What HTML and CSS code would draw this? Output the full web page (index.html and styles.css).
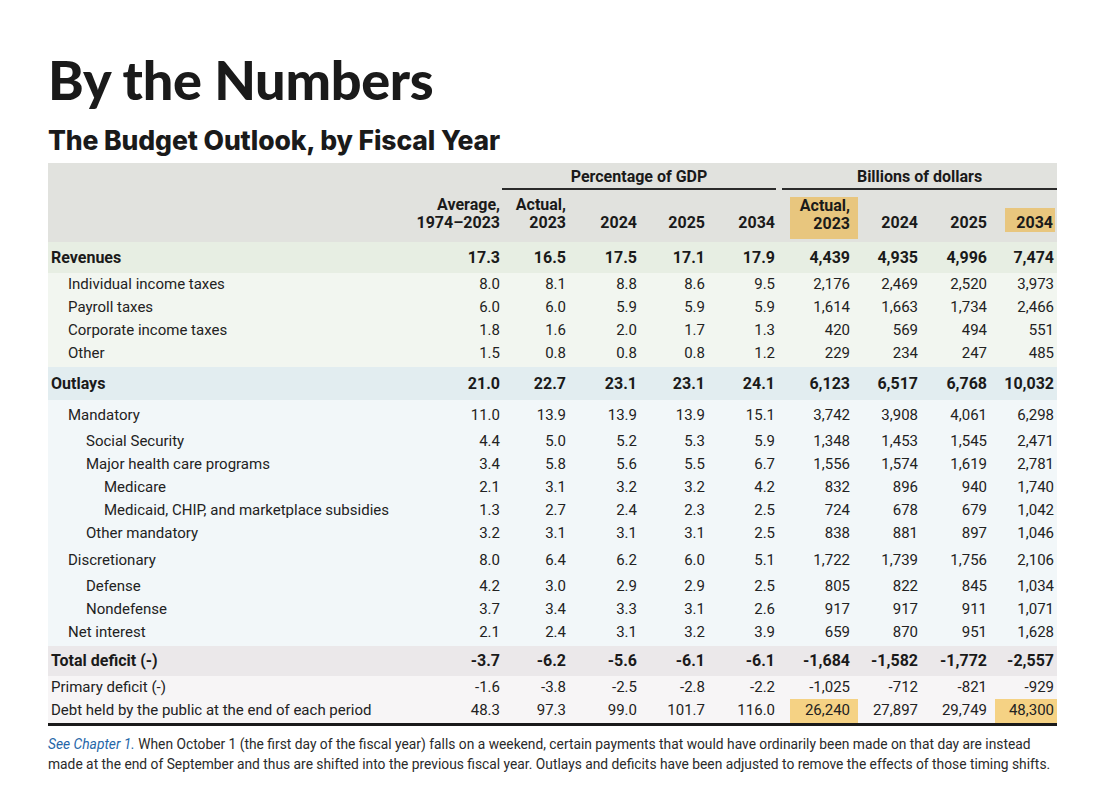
FILE: index.html
```html
<!DOCTYPE html>
<html lang="en">
<head>
<meta charset="utf-8">
<title>By the Numbers</title>
<link rel="stylesheet" href="styles.css">
</head>
<body>
<div class="page">
  <h1 class="title">By the Numbers</h1>
  <h2 class="subtitle">The Budget Outlook, by Fiscal Year</h2>
  <table class="budget">
    <colgroup>
      <col class="c-label"><col class="c-avg"><col class="c-act"><col class="c-24"><col class="c-25"><col class="c-34"><col class="c-gap"><col class="c-dact"><col class="c-d24"><col class="c-d25"><col class="c-d34">
    </colgroup>
    <thead>
      <tr class="grp">
        <th colspan="2"></th>
        <th colspan="4"><div class="grp-line grp-pct">Percentage of GDP</div></th>
        <th colspan="5"><div class="grp-line grp-bil">Billions of dollars</div></th>
      </tr>
      <tr class="cols">
        <th></th>
        <th class="num">Average,<br>1974–2023</th>
        <th class="num">Actual,<br>2023</th>
        <th class="num">2024</th>
        <th class="num">2025</th>
        <th class="num">2034</th>
        <th></th>
        <th class="num hl-cell"><div class="hl-head">Actual,<br>2023</div></th>
        <th class="num">2024</th>
        <th class="num">2025</th>
        <th class="num last"><span class="hl-year">2034</span></th>
      </tr>
    </thead>
    <tbody>
      <tr class="sec rev-sec"><td class="l0">Revenues</td><td>17.3</td><td>16.5</td><td>17.5</td><td>17.1</td><td>17.9</td><td></td><td>4,439</td><td>4,935</td><td>4,996</td><td class="last">7,474</td></tr>
      <tr class="rev"><td class="l1">Individual income taxes</td><td>8.0</td><td>8.1</td><td>8.8</td><td>8.6</td><td>9.5</td><td></td><td>2,176</td><td>2,469</td><td>2,520</td><td class="last">3,973</td></tr>
      <tr class="rev"><td class="l1">Payroll taxes</td><td>6.0</td><td>6.0</td><td>5.9</td><td>5.9</td><td>5.9</td><td></td><td>1,614</td><td>1,663</td><td>1,734</td><td class="last">2,466</td></tr>
      <tr class="rev"><td class="l1">Corporate income taxes</td><td>1.8</td><td>1.6</td><td>2.0</td><td>1.7</td><td>1.3</td><td></td><td>420</td><td>569</td><td>494</td><td class="last">551</td></tr>
      <tr class="rev tail"><td class="l1">Other</td><td>1.5</td><td>0.8</td><td>0.8</td><td>0.8</td><td>1.2</td><td></td><td>229</td><td>234</td><td>247</td><td class="last">485</td></tr>

      <tr class="sec out-sec"><td class="l0">Outlays</td><td>21.0</td><td>22.7</td><td>23.1</td><td>23.1</td><td>24.1</td><td></td><td>6,123</td><td>6,517</td><td>6,768</td><td class="last">10,032</td></tr>
      <tr class="out mid"><td class="l1">Mandatory</td><td>11.0</td><td>13.9</td><td>13.9</td><td>13.9</td><td>15.1</td><td></td><td>3,742</td><td>3,908</td><td>4,061</td><td class="last">6,298</td></tr>
      <tr class="out"><td class="l2">Social Security</td><td>4.4</td><td>5.0</td><td>5.2</td><td>5.3</td><td>5.9</td><td></td><td>1,348</td><td>1,453</td><td>1,545</td><td class="last">2,471</td></tr>
      <tr class="out"><td class="l2">Major health care programs</td><td>3.4</td><td>5.8</td><td>5.6</td><td>5.5</td><td>6.7</td><td></td><td>1,556</td><td>1,574</td><td>1,619</td><td class="last">2,781</td></tr>
      <tr class="out"><td class="l3">Medicare</td><td>2.1</td><td>3.1</td><td>3.2</td><td>3.2</td><td>4.2</td><td></td><td>832</td><td>896</td><td>940</td><td class="last">1,740</td></tr>
      <tr class="out"><td class="l3">Medicaid, CHIP, and marketplace subsidies</td><td>1.3</td><td>2.7</td><td>2.4</td><td>2.3</td><td>2.5</td><td></td><td>724</td><td>678</td><td>679</td><td class="last">1,042</td></tr>
      <tr class="out"><td class="l2">Other mandatory</td><td>3.2</td><td>3.1</td><td>3.1</td><td>3.1</td><td>2.5</td><td></td><td>838</td><td>881</td><td>897</td><td class="last">1,046</td></tr>
      <tr class="out mid"><td class="l1">Discretionary</td><td>8.0</td><td>6.4</td><td>6.2</td><td>6.0</td><td>5.1</td><td></td><td>1,722</td><td>1,739</td><td>1,756</td><td class="last">2,106</td></tr>
      <tr class="out"><td class="l2">Defense</td><td>4.2</td><td>3.0</td><td>2.9</td><td>2.9</td><td>2.5</td><td></td><td>805</td><td>822</td><td>845</td><td class="last">1,034</td></tr>
      <tr class="out"><td class="l2">Nondefense</td><td>3.7</td><td>3.4</td><td>3.3</td><td>3.1</td><td>2.6</td><td></td><td>917</td><td>917</td><td>911</td><td class="last">1,071</td></tr>
      <tr class="out tail"><td class="l1">Net interest</td><td>2.1</td><td>2.4</td><td>3.1</td><td>3.2</td><td>3.9</td><td></td><td>659</td><td>870</td><td>951</td><td class="last">1,628</td></tr>

      <tr class="sec def-sec"><td class="l0">Total deficit (-)</td><td>-3.7</td><td>-6.2</td><td>-5.6</td><td>-6.1</td><td>-6.1</td><td></td><td>-1,684</td><td>-1,582</td><td>-1,772</td><td class="last">-2,557</td></tr>
      <tr class="def"><td class="l0">Primary deficit (-)</td><td>-1.6</td><td>-3.8</td><td>-2.5</td><td>-2.8</td><td>-2.2</td><td></td><td>-1,025</td><td>-712</td><td>-821</td><td class="last">-929</td></tr>
      <tr class="def debt"><td class="l0">Debt held by the public at the end of each period</td><td>48.3</td><td>97.3</td><td>99.0</td><td>101.7</td><td>116.0</td><td></td><td class="hl">26,240</td><td>27,897</td><td>29,749</td><td class="last hl">48,300</td></tr>
    </tbody>
  </table>
  <p class="note"><span class="ref">See Chapter 1.</span> When October 1 (the first day of the fiscal year) falls on a weekend, certain payments that would have ordinarily been made on that day are instead<br>made at the end of September and thus are shifted into the previous fiscal year. Outlays and deficits have been adjusted to remove the effects of those timing shifts.</p>
</div>
</body>
</html>
```
FILE: styles.css
```css
html, body {
  margin: 0;
  padding: 0;
  background: #ffffff;
}

.page {
  padding: 53px 0 0 48px;
  width: 1009px;
  color: #1b1b1b;
  font-family: Roboto, "Liberation Sans", sans-serif;
}

.title {
  margin: 0;
  font-family: Lato, "Liberation Sans", sans-serif;
  font-weight: 900;
  font-size: 54px;
  line-height: 54px;
  letter-spacing: -0.3px;
  color: #1a1a1a;
}

.subtitle {
  margin: 20px 0 0 0;
  font-family: Inter, Lato, "Liberation Sans", sans-serif;
  font-weight: 800;
  font-size: 26.5px;
  line-height: 27px;
  letter-spacing: -0.1px;
  color: #1a1a1a;
}

.budget {
  margin-top: 9px;
  width: 1009px;
  table-layout: fixed;
  border-collapse: collapse;
  border-spacing: 0;
  font-size: 15px;
}

.c-label { width: 352px; }
.c-avg { width: 108px; }
.c-act { width: 66px; }
.c-24 { width: 71px; }
.c-25 { width: 68px; }
.c-34 { width: 70px; }
.c-gap { width: 7px; }
.c-dact { width: 68px; }
.c-d24 { width: 68px; }
.c-d25 { width: 69px; }
.c-d34 { width: 62px; }

.budget th, .budget td {
  padding: 0 8px 0 0;
  text-align: right;
  white-space: nowrap;
}

.budget td.last, .budget th.last { padding-right: 3px; }

/* header */
.budget thead tr { background: #e1e2de; }
.budget th {
  font-weight: 700;
  font-size: 16px;
  line-height: 18px;
  color: #1a1a1a;
}
.grp th {
  height: 30px;
  vertical-align: top;
  padding: 0;
}
.grp-line {
  text-align: center;
  padding-top: 5px;
  height: 20px;
  border-bottom: 2px solid #2b2b2b;
}
.grp-pct { margin: 0 7px 0 -6px; }
.grp-bil { margin: 0 0 0 -1px; }

.cols th {
  height: 39px;
  vertical-align: bottom;
  padding-bottom: 10px;
}
.cols th.hl-cell {
  padding: 0;
  vertical-align: top;
  height: 49px;
}
.hl-head {
  margin-top: 4px;
  height: 42px;
  box-sizing: border-box;
  padding: 0 8px 0 0;
  background: #e8c67e;
}
.hl-year {
  display: inline-block;
  background: #e8c67e;
  padding: 6px 2px 0 11px;
  margin-bottom: -2px;
  margin-right: -1px;
}

/* body */
.budget td {
  height: 23px;
  line-height: 23px;
  vertical-align: top;
  color: #222;
}
.budget td.l0 { text-align: left; padding-left: 3px; }
.budget td.l1 { text-align: left; padding-left: 20px; }
.budget td.l2 { text-align: left; padding-left: 38px; }
.budget td.l3 { text-align: left; padding-left: 56px; }

.sec td {
  font-weight: 700;
  font-size: 16px;
  color: #1a1a1a;
}
.rev-sec td { height: 31px; line-height: 31px; }
.out-sec td { height: 33px; line-height: 33px; }
.def-sec td { height: 30px; line-height: 30px; }

.rev-sec { background: #e7eee3; }
.rev { background: #f2f6f0; }
.out-sec { background: #e2edf0; }
.out { background: #f2f7f9; }
.def-sec { background: #ebe8ea; }
.def { background: #f7f5f6; }

.budget tr.mid td { height: 30px; line-height: 30px; }
.budget tr.tail td { height: 25px; }
.budget tr.debt td {
  height: 24px;
  line-height: 23px;
  border-bottom: 3px solid #1a1a1a;
}
.budget td.hl { background: #f5d284; }

.note {
  margin: 8px 0 0 0;
  font-size: 13.8px;
  line-height: 20px;
  color: #2a2a2a;
  white-space: nowrap;
}
.note .ref {
  color: #2566a8;
  font-style: italic;
}
```
